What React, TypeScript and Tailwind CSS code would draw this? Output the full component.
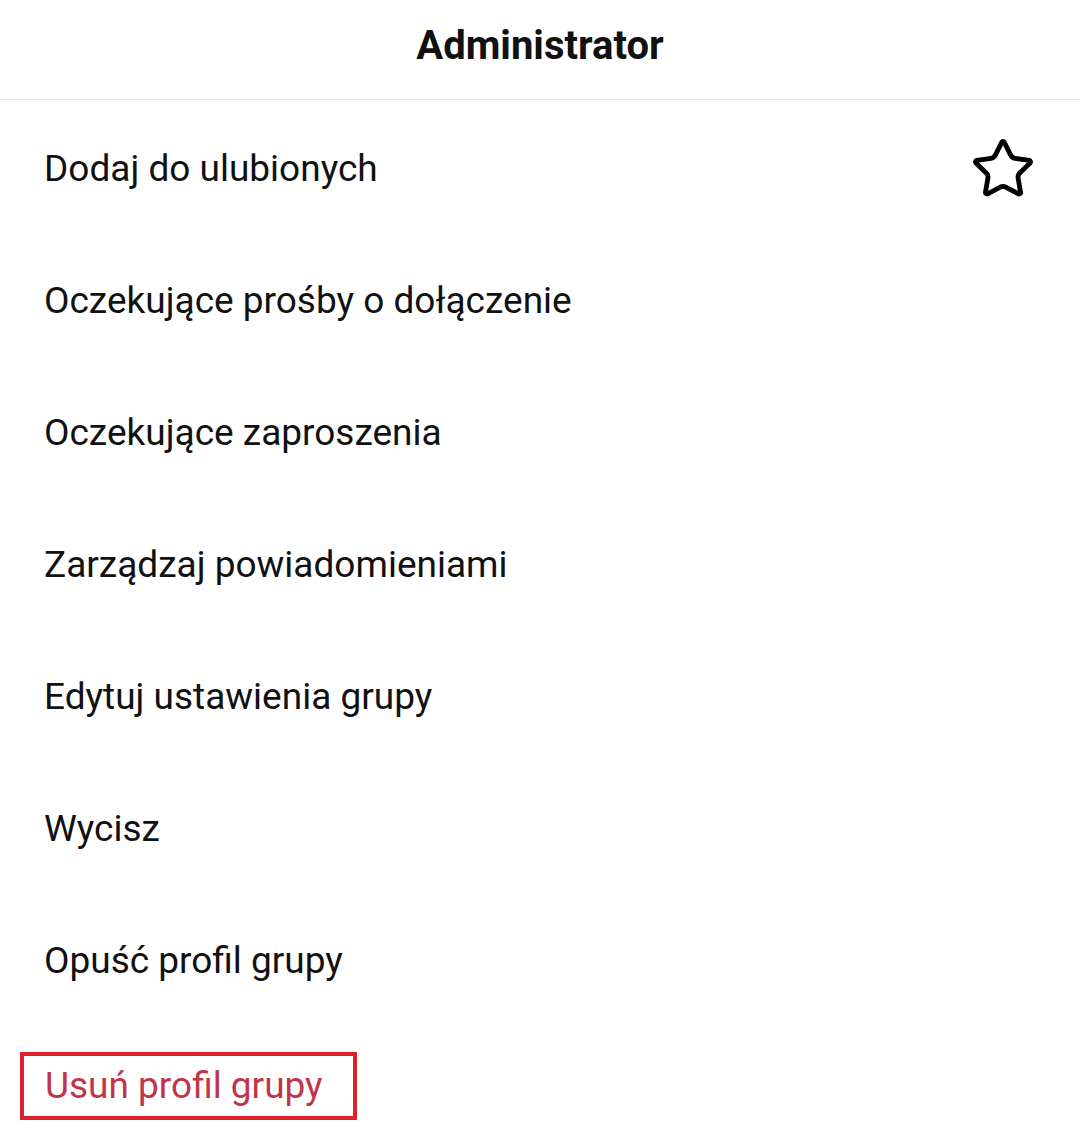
import { Star } from "lucide-react";

const items = [
  "Dodaj do ulubionych",
  "Oczekujące prośby o dołączenie",
  "Oczekujące zaproszenia",
  "Zarządzaj powiadomieniami",
  "Edytuj ustawienia grupy",
  "Wycisz",
  "Opuść profil grupy",
];

export default function App() {
  return (
    <div className="w-[1080px] h-[1131px] bg-white overflow-hidden font-['Roboto',sans-serif] text-[#111]">
      <header className="h-[100px] flex items-center justify-center pb-[8px] border-b border-[#e6e6e6]">
        <h1 className="text-[40px] font-bold">Administrator</h1>
      </header>
      <ul className="pt-[3px]">
        {items.map((label, i) => (
          <li key={label} className="h-[132px] flex items-center justify-between pl-[44px] pr-[44px]">
            <span className="text-[37px]">{label}</span>
            {i === 0 && <Star size={66} strokeWidth={1.75} className="text-black" />}
          </li>
        ))}
        <li className="pt-[25px] pl-[20px]">
          <span className="inline-flex items-center border-[4px] border-[#e0212b] pl-[21px] pr-[30px] h-[68px] text-[37px] text-[#c1354b]">
            Usuń profil grupy
          </span>
        </li>
      </ul>
    </div>
  );
}
